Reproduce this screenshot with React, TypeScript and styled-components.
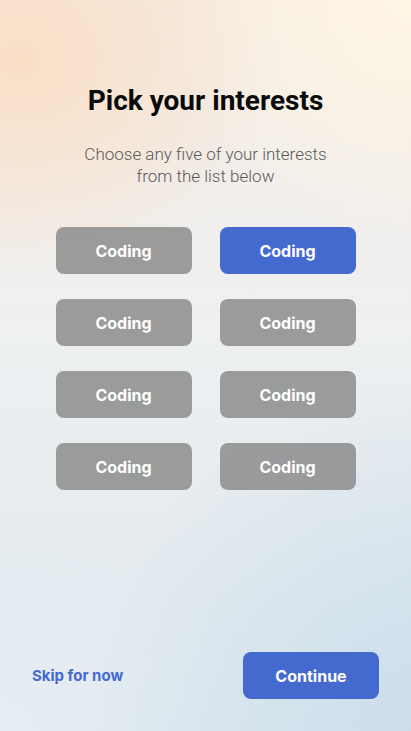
import React from "react";
import styled, { createGlobalStyle } from "styled-components";

const Global = createGlobalStyle`
  html, body { margin: 0; padding: 0; }
  body { font-family: Inter, "Noto Sans", sans-serif; }
  * { box-sizing: border-box; }
`;

const Screen = styled.div`
  width: 411px;
  height: 731px;
  overflow: hidden;
  display: flex;
  flex-direction: column;
  align-items: center;
  background:
    radial-gradient(ellipse 260px 220px at 20px 60px, rgba(250, 222, 196, 0.95), rgba(250, 222, 196, 0) 100%),
    radial-gradient(ellipse 260px 240px at 411px 0px, rgba(255, 246, 228, 1), rgba(255, 246, 228, 0) 100%),
    radial-gradient(ellipse 340px 360px at 430px 731px, rgba(203, 222, 235, 1), rgba(203, 222, 235, 0) 100%),
    radial-gradient(ellipse 260px 220px at 0px 731px, rgba(230, 238, 244, 1), rgba(230, 238, 244, 0) 100%),
    linear-gradient(180deg, #f5ece4 0%, #eef0f1 45%, #dfe8ee 100%);
`;

const Title = styled.h1`
  margin: 84px 0 0;
  font-family: Roboto, "Noto Sans", sans-serif;
  font-weight: 700;
  font-size: 28px;
  line-height: 34px;
  color: #0a0a0a;
  text-align: center;
`;

const Subtitle = styled.p`
  margin: 25px 0 0;
  font-family: Roboto, "Noto Sans", sans-serif;
  font-weight: 300;
  font-size: 17px;
  line-height: 22px;
  color: #5a5a5a;
  text-align: center;
`;

const Grid = styled.div`
  margin-top: 40px;
  display: grid;
  grid-template-columns: 136px 136px;
  column-gap: 28px;
  row-gap: 25px;
`;

const Chip = styled.button<{ $selected?: boolean }>`
  height: 47px;
  border: none;
  border-radius: 8px;
  background: ${(p) => (p.$selected ? "#456acf" : "rgba(140, 140, 140, 0.85)")};
  color: #ffffff;
  font-family: Inter, "Noto Sans", sans-serif;
  font-weight: 700;
  font-size: 16px;
  cursor: pointer;
`;

const Footer = styled.div`
  margin-top: auto;
  margin-bottom: 32px;
  width: 100%;
  padding: 0 32px;
  display: flex;
  align-items: center;
  justify-content: space-between;
`;

const SkipLink = styled.button`
  border: none;
  background: none;
  padding: 0;
  color: #4669cf;
  font-family: Inter, "Noto Sans", sans-serif;
  font-weight: 700;
  font-size: 15px;
  cursor: pointer;
`;

const PrimaryButton = styled.button`
  width: 136px;
  height: 47px;
  border: none;
  border-radius: 8px;
  background: #456acf;
  color: #ffffff;
  font-family: Inter, "Noto Sans", sans-serif;
  font-weight: 700;
  font-size: 16px;
  cursor: pointer;
`;

const interests = Array.from({ length: 8 }, (_, i) => ({ label: "Coding", selected: i === 1 }));

export default function App() {
  return (
    <>
      <Global />
      <Screen>
        <Title>Pick your interests</Title>
        <Subtitle>
          Choose any five of your interests
          <br />
          from the list below
        </Subtitle>
        <Grid>
          {interests.map((it, i) => (
            <Chip key={i} $selected={it.selected}>
              {it.label}
            </Chip>
          ))}
        </Grid>
        <Footer>
          <SkipLink>Skip for now</SkipLink>
          <PrimaryButton>Continue</PrimaryButton>
        </Footer>
      </Screen>
    </>
  );
}
